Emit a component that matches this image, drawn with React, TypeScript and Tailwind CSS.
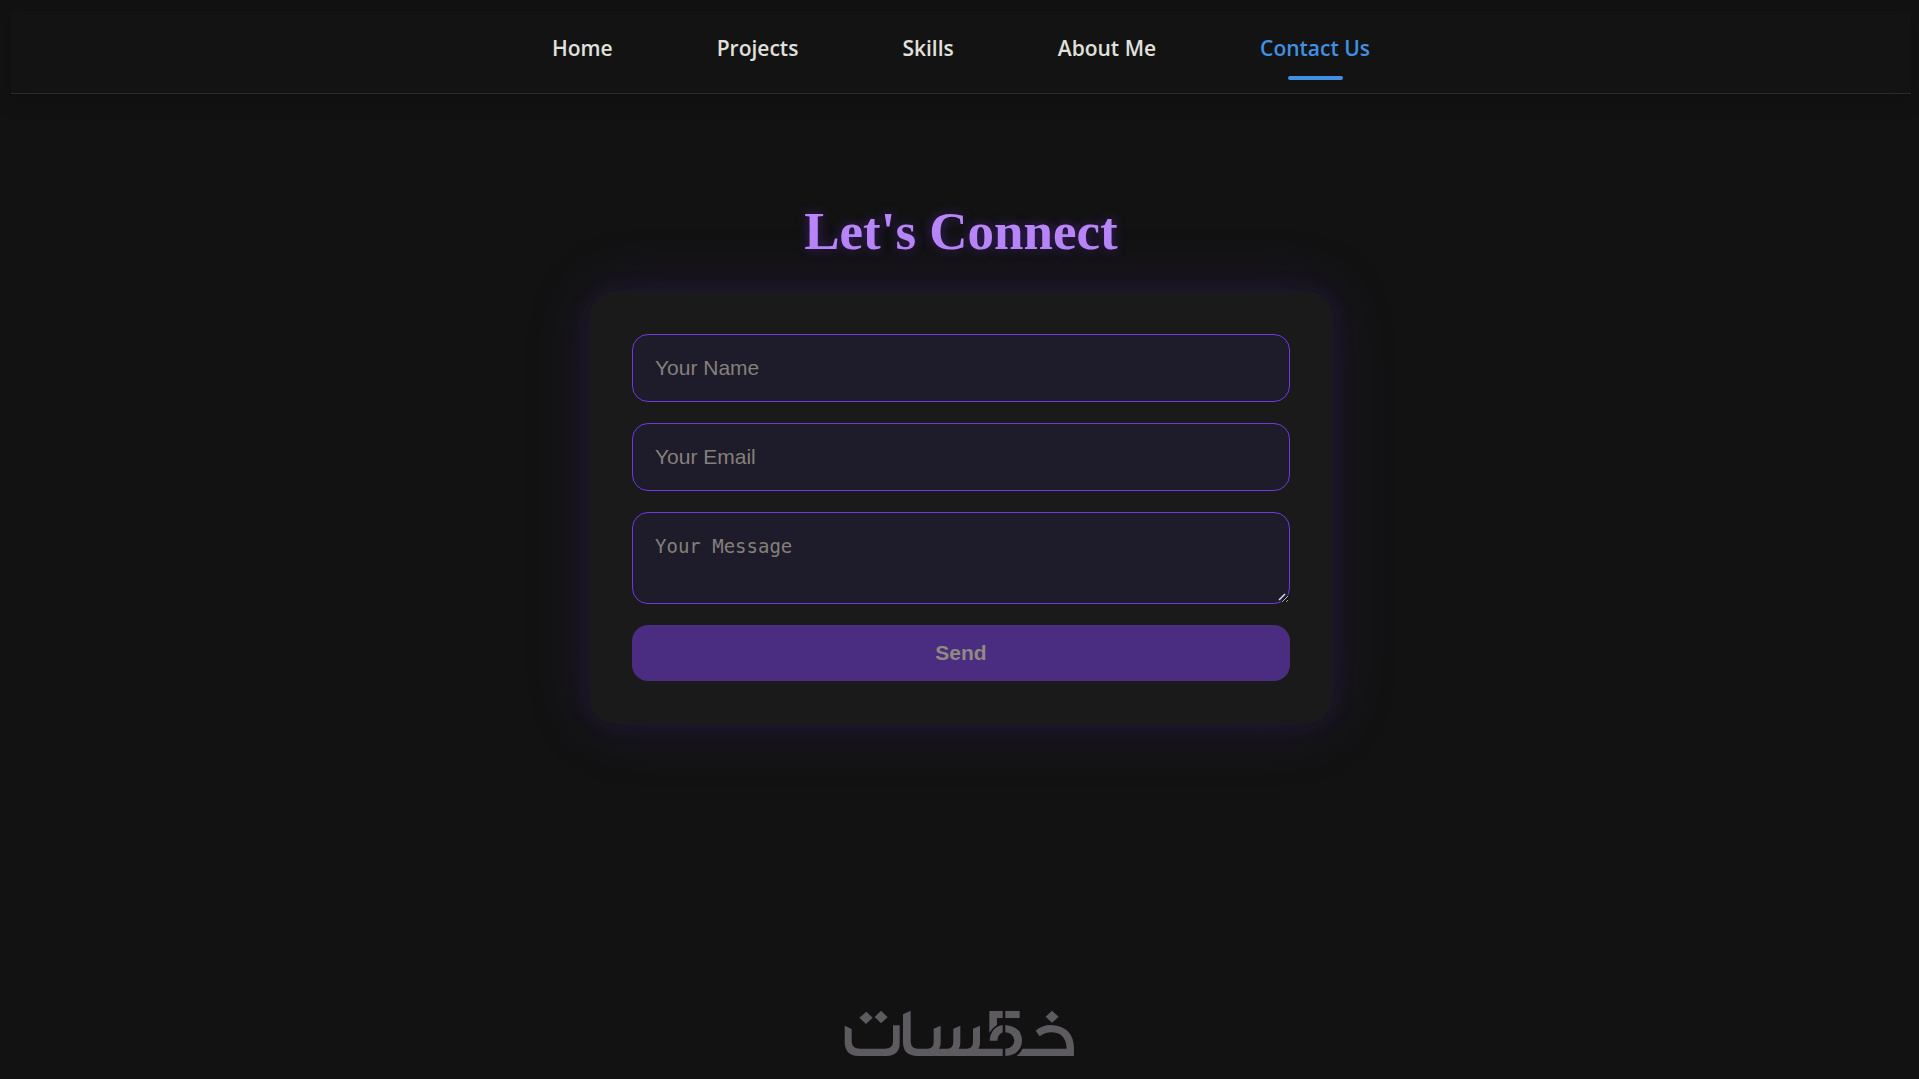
import React, { useState } from 'react';

const links = [
  { label: 'Home', href: '#home' },
  { label: 'Projects', href: '#projects' },
  { label: 'Skills', href: '#skills' },
  { label: 'About Me', href: '#about' },
  { label: 'Contact Us', href: '#contact', active: true },
];

const fieldClass =
  'block w-full rounded-2xl border border-[#7038e0] bg-[#1e1b2b] px-[22px] text-[#e0e0e0] placeholder:text-[#85807a] outline-none';

function Navbar() {
  return (
    <nav className="border-b border-[#2c2c2c] bg-[#131313] shadow-[0_4px_22px_rgba(0,0,0,0.2)]">
      <ul className="flex h-[82px] justify-center gap-[104px] pt-[22px] font-['Open_Sans',sans-serif] text-[21px] leading-[30px] font-semibold">
        {links.map((link) => (
          <li key={link.label}>
            <a
              href={link.href}
              className={`flex flex-col items-center gap-[13px] ${link.active ? 'text-[#4190e2]' : 'text-[#e0e0dc]'}`}
            >
              {link.label}
              {link.active && <span className="h-1 w-1/2 rounded-full bg-[#4190e2]" />}
            </a>
          </li>
        ))}
      </ul>
    </nav>
  );
}

function Logo() {
  return (
    <svg viewBox="40 30 693 140" className="w-[231px]" fill="#5d5b5f" role="img" aria-label="خمسات">
      <path d="M107 35 L126 53 L106 72 L86 53 Z M151 32 L171 52 L151 70 L132 51 Z M664 32 L684 50 L664 68 L645 50 Z" />
      <path d="M42 77 L63 87 V125 Q64 146 88 146 H162 Q186 146 187 125 V76 H207 V132 Q206 166 168 168 H82 Q44 166 42 128 Z" />
      <path d="M217 43 L240 32 V125 Q241 146 262 146 H290 Q309 145 309 125 V86 L330 77 V130 Q330 140 325 146 H350 Q368 145 368 125 V86 L389 77 V130 Q389 140 384 146 H408 Q427 145 427 125 V86 L448 77 V130 Q448 140 443 146 H516 V168 H256 Q219 166 217 130 Z" />
      <path d="M476 33 H516 V54 H499 V75 Q485 83 476 98 Z M524 33 H567 V54 H524 Z" />
      <path d="M516 75 V97 Q502 102 500 122 H477 Q480 82 516 75 Z M524 75 Q574 80 574 123 Q571 164 524 168 V146 Q550 143 551 122 Q549 99 524 97 Z" />
      <path d="M615 92 Q640 72 668 76 Q729 83 730 145 V168 H558 Q569 160 576 146 H708 Q706 99 665 97 Q644 96 627 109 Z" />
    </svg>
  );
}

export default function App() {
  const [form, setForm] = useState({ name: '', email: '', message: '' });

  const onChange = (e: React.ChangeEvent<HTMLInputElement | HTMLTextAreaElement>) => {
    setForm({ ...form, [e.target.name]: e.target.value });
  };

  const incomplete = !form.name || !form.email || !form.message;

  return (
    <div className="flex min-h-screen flex-col bg-[#121212]">
      <div className="flex-1 pt-[11px] pr-2 pl-[11px]">
        <Navbar />
        <main className="flex flex-col items-center pt-[107px]">
          <h1 className="mb-[30px] font-['Liberation_Serif',serif] text-[53px] leading-[60px] font-bold text-[#b886f8] [text-shadow:0_0_12px_rgba(124,58,237,0.4)]">
            Let's Connect
          </h1>
          <form
            onSubmit={(e) => e.preventDefault()}
            className="flex w-full max-w-[744px] flex-col gap-[21px] rounded-[28px] bg-[#1a1a1a] p-[43px] font-['Liberation_Sans',sans-serif] text-[21px] shadow-[0_0_22px_rgba(90,50,180,0.15),0_0_66px_rgba(100,60,190,0.17)]"
          >
            <input
              type="text"
              name="name"
              aria-label="Your Name"
              placeholder="Your Name"
              value={form.name}
              onChange={onChange}
              className={`${fieldClass} h-[68px]`}
            />
            <input
              type="email"
              name="email"
              aria-label="Your Email"
              placeholder="Your Email"
              value={form.email}
              onChange={onChange}
              className={`${fieldClass} h-[68px]`}
            />
            <div className="relative">
              <textarea
                name="message"
                aria-label="Your Message"
                placeholder="Your Message"
                rows={2}
                value={form.message}
                onChange={onChange}
                className={`${fieldClass} h-[92px] resize-y py-[21px] font-['DejaVu_Sans_Mono',monospace] text-[19px] leading-[25px]`}
              />
              {/* resize grip */}
              <svg
                viewBox="0 0 10 10"
                className="pointer-events-none absolute right-0.5 bottom-0.5 size-2.5"
                fill="none"
                stroke="#d5dfe6"
                strokeWidth="1.5"
              >
                <path d="M1 8 L7 2" />
              </svg>
            </div>
            <button
              type="submit"
              disabled={incomplete}
              className="h-14 rounded-2xl bg-[#7c3aed] font-bold text-white disabled:bg-[#4a2c80] disabled:text-[#918a80]"
            >
              Send
            </button>
          </form>
        </main>
      </div>
      <footer className="flex justify-center pb-[22px]">
        <Logo />
      </footer>
    </div>
  );
}
